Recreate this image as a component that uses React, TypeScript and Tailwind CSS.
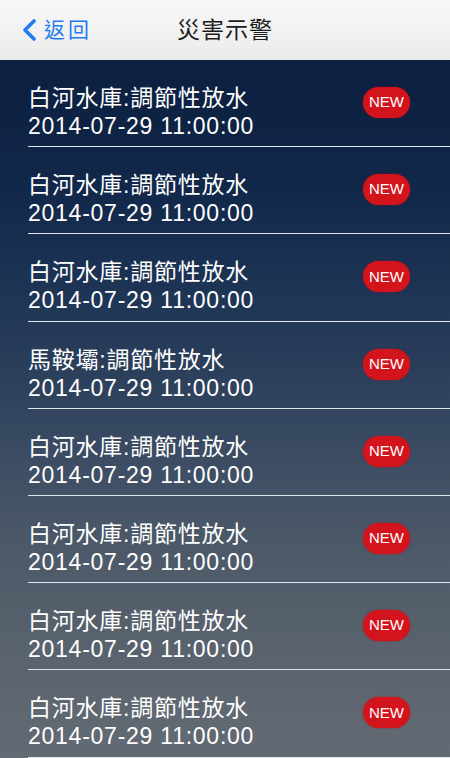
const items = [
  "白河水庫:調節性放水",
  "白河水庫:調節性放水",
  "白河水庫:調節性放水",
  "馬鞍壩:調節性放水",
  "白河水庫:調節性放水",
  "白河水庫:調節性放水",
  "白河水庫:調節性放水",
  "白河水庫:調節性放水",
];

function AlertRow({ title }: { title: string }) {
  return (
    <li className="h-[87.2px] pl-[28px] flex flex-col">
      <div className="flex-1 flex items-start pt-[24px] pr-[40px]">
        <div className="flex-1 text-white text-[23px] leading-[28px]">
          <p className="tracking-[0.75px]">{title}</p>
          <p className="tracking-[0.75px]">2014-07-29 11:00:00</p>
        </div>
        <span className="mt-[3px] w-[47px] h-[31px] rounded-full bg-[#d3141c] text-white text-[15px] flex items-center justify-center shadow-[0_0_2px_rgba(200,0,0,0.6)]">
          NEW
        </span>
      </div>
      <div className="h-px bg-[#dfe5ec]" />
    </li>
  );
}

export default function App() {
  return (
    <div
      className="w-[450px] h-[758px] overflow-hidden flex flex-col bg-[linear-gradient(180deg,#0b1f40_0%,#0d2142_13%,#12284a_25%,#1c3354_37%,#2a3e5a_48%,#3b4c63_60%,#4b5868_71%,#57616c_83%,#5f6771_94%,#626a73_100%)]"
      style={{ fontFamily: '"Liberation Sans", "Noto Sans CJK TC", sans-serif' }}
    >
      <header className="h-[60px] shrink-0 relative flex items-center bg-[linear-gradient(180deg,#f8f8f8,#ebebeb)]">
        <div className="flex items-center pl-[22px] text-[#1f7bf1]">
          <svg width="14" height="22" viewBox="0 0 14 22" className="mr-[8px]">
            <path d="M12 2 L3 11 L12 20" fill="none" stroke="currentColor" strokeWidth="3.6" strokeLinecap="round" strokeLinejoin="round" />
          </svg>
          <span className="text-[21px] tracking-[3px]">返回</span>
        </div>
        <h1 className="absolute left-0 right-0 text-center text-[23px] tracking-[1px] text-[#1c1c1c] pointer-events-none">
          災害示警
        </h1>
      </header>
      <ul className="flex flex-col">
        {items.map((t, i) => (
          <AlertRow key={i} title={t} />
        ))}
      </ul>
    </div>
  );
}
